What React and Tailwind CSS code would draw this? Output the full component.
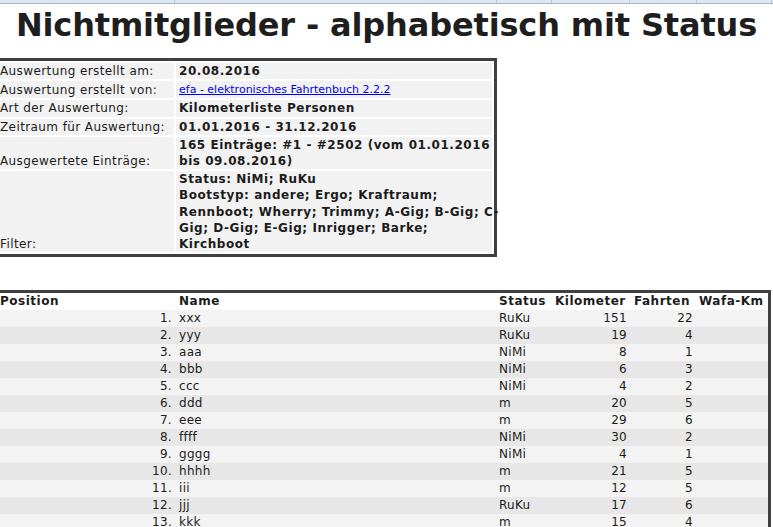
import React from "react";

const info = [
  { label: "Auswertung erstellt am:", value: ["20.08.2016"] },
  { label: "Auswertung erstellt von:", link: "efa - elektronisches Fahrtenbuch 2.2.2" },
  { label: "Art der Auswertung:", value: ["Kilometerliste Personen"] },
  { label: "Zeitraum für Auswertung:", value: ["01.01.2016 - 31.12.2016"] },
  { label: "Ausgewertete Einträge:", value: ["165 Einträge: #1 - #2502 (vom 01.01.2016", "bis 09.08.2016)"] },
  {
    label: "Filter:",
    value: [
      "Status: NiMi; RuKu",
      "Bootstyp: andere; Ergo; Kraftraum;",
      "Rennboot; Wherry; Trimmy; A-Gig; B-Gig; C-",
      "Gig; D-Gig; E-Gig; Inrigger; Barke;",
      "Kirchboot",
    ],
  },
];

const rows = [
  ["1.", "xxx", "RuKu", "151", "22"],
  ["2.", "yyy", "RuKu", "19", "4"],
  ["3.", "aaa", "NiMi", "8", "1"],
  ["4.", "bbb", "NiMi", "6", "3"],
  ["5.", "ccc", "NiMi", "4", "2"],
  ["6.", "ddd", "m", "20", "5"],
  ["7.", "eee", "m", "29", "6"],
  ["8.", "ffff", "NiMi", "30", "2"],
  ["9.", "gggg", "NiMi", "4", "1"],
  ["10.", "hhhh", "m", "21", "5"],
  ["11.", "iii", "m", "12", "5"],
  ["12.", "jjj", "RuKu", "17", "6"],
  ["13.", "kkk", "m", "15", "4"],
];

const cols = "grid grid-cols-[177px_320px_56px_78px_66px_71px]";

export default function App() {
  return (
    <div
      className="h-[527px] w-[773px] overflow-hidden bg-white text-[#1c1c1c]"
      style={{ fontFamily: '"DejaVu Sans", Verdana, sans-serif' }}
    >
      {/* top strip */}
      <div className="flex h-[4px] border-b border-[#a7b8cc] bg-[#dde7f2]">
        <div className="w-[175px] border-r border-[#b9c7d8]" />
        <div className="w-[322px] border-r border-[#b9c7d8]" />
        <div className="w-[55px] border-r border-[#b9c7d8]" />
        <div className="w-[78px] border-r border-[#b9c7d8]" />
        <div className="w-[67px] border-r border-[#b9c7d8]" />
        <div className="w-[75px] border-r border-[#b9c7d8]" />
      </div>

      <h1 className="mt-[2px] flex h-[52px] items-start justify-center whitespace-nowrap text-[32px] font-bold leading-[38px] tracking-[-0.15px] text-[#1e1e1e]">
        Nichtmitglieder - alphabetisch mit Status
      </h1>

      {/* info table */}
      <div className="ml-[-5px] w-[502px] border-[3px] border-[#404040] bg-white p-[2px]">
        <div className="grid grid-cols-[174px_316px] gap-[2px]">
          {info.map((r, i) => (
            <React.Fragment key={i}>
              <div className="flex items-end bg-[#f2f2f2] text-[12px] leading-[16.2px] tracking-[0.4px] whitespace-nowrap">
                {r.label}
              </div>
              <div className="bg-[#f2f2f2] pl-[3px] text-[12px] font-bold leading-[16.2px] tracking-[0.55px] whitespace-nowrap">
                {r.link ? (
                  <a href="#" className="text-[11px] font-normal tracking-[0px] text-[#0000ee] underline">
                    {r.link}
                  </a>
                ) : (
                  r.value.map((v, j) => <div key={j}>{v}</div>)
                )}
              </div>
            </React.Fragment>
          ))}
        </div>
      </div>

      {/* data table */}
      <div className="ml-[-3px] mt-[33px] w-[774px] border-l-[3px] border-r-[3px] border-t-[3px] border-[#404040]">
        <div className={`${cols} h-[17px] bg-white text-[12px] font-bold leading-[17px] tracking-[0.5px] whitespace-nowrap`}>
          <div>Position</div>
          <div className="pl-[2px]">Name</div>
          <div className="pl-[2px]">Status</div>
          <div className="pl-[2px]">Kilometer</div>
          <div className="pl-[3px]">Fahrten</div>
          <div className="pl-[2px]">Wafa-Km</div>
        </div>
        {rows.map((r, i) => (
          <div
            key={i}
            className={`${cols} h-[17px] text-[12px] leading-[17px] tracking-[0.3px] whitespace-nowrap ${
              i % 2 === 0 ? "bg-[#f3f3f3]" : "bg-[#e7e7e7]"
            }`}
          >
            <div className="pr-[5px] text-right">{r[0]}</div>
            <div className="pl-[2px]">{r[1]}</div>
            <div className="pl-[2px]">{r[2]}</div>
            <div className="pr-[4px] text-right">{r[3]}</div>
            <div className="pr-[4px] text-right">{r[4]}</div>
            <div />
          </div>
        ))}
      </div>
    </div>
  );
}
